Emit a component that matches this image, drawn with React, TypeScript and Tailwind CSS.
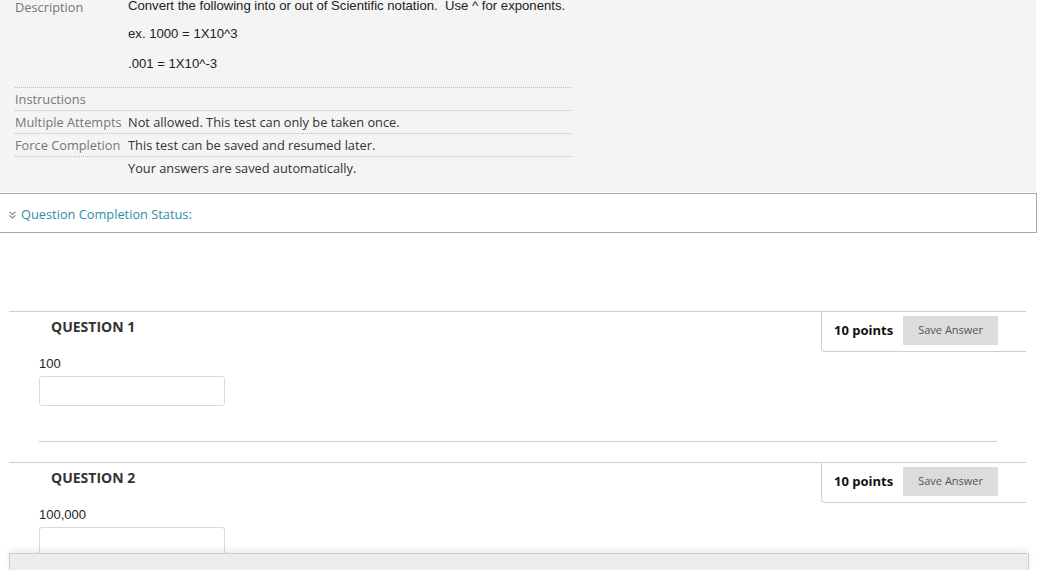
import React from "react";

const openSans = { fontFamily: '"Open Sans", "Liberation Sans", sans-serif' };
const arial = { fontFamily: '"Liberation Sans", Arial, sans-serif' };

type InfoRow = { label: string; value: string };

const rows: InfoRow[] = [
  { label: "Instructions", value: "" },
  { label: "Multiple Attempts", value: "Not allowed. This test can only be taken once." },
  { label: "Force Completion", value: "This test can be saved and resumed later." },
  { label: "", value: "Your answers are saved automatically." },
];

const Question = ({ n, prompt }: { n: number; prompt: string }) => (
  <div className="ml-[9px] w-[1017px] border-t border-[#cfcfcf]">
    <div className="flex justify-between">
      <div
        className="pl-[42px] pt-[6px] text-[14px] leading-[18px] font-bold text-[#333]"
        style={openSans}
      >
        QUESTION {n}
      </div>
      <div className="flex h-[40px] w-[205px] items-start gap-[10px] rounded-bl-[4px] border-b border-l border-[#cfcfcf] pl-[12px] pt-[4px]">
        <span
          className="h-[29px] text-[13px] leading-[29px] font-bold text-[#111]"
          style={openSans}
        >
          10 points
        </span>
        <button
          className="h-[29px] w-[95px] bg-[#dcdcdc] text-[11px] text-[#555]"
          style={openSans}
        >
          Save Answer
        </button>
      </div>
    </div>
    <div className="pl-[30px]">
      <p className="mt-[4px] text-[13px] leading-[16px] text-[#222]" style={arial}>
        {prompt}
      </p>
      <input
        type="text"
        className="mt-[4px] block h-[30px] w-[186px] rounded-[3px] border border-[#dadada] bg-white"
      />
      <div className="mr-[29px] mt-[35px] mb-[20px] border-t border-[#cfcfcf]" />
    </div>
  </div>
);

export default function App() {
  return (
    <div className="relative h-[570px] w-[1038px] overflow-hidden bg-white">
      {/* test info panel */}
      <div className="w-[1036px] rounded-br-[4px] bg-[#f4f4f4] pb-[13px]">
        <div className="ml-[15px] w-[557px]">
          <div className="-mt-[2px] flex pb-[15px]">
            <div
              className="w-[113px] shrink-0 text-[12.8px] leading-[18px] text-[#777]"
              style={openSans}
            >
              Description
            </div>
            <div className="text-[13.15px] leading-[16px] text-[#222]" style={arial}>
              <p>Convert the following into or out of Scientific notation.&nbsp; Use ^ for exponents.</p>
              <p className="mt-[12px]">ex. 1000 = 1X10^3</p>
              <p className="mt-[14px]">.001 = 1X10^-3</p>
            </div>
          </div>
          {rows.map((r, i) => (
            <div
              key={i}
              className="flex h-[23px] border-t border-dotted border-[#bdbdbd] text-[12.8px] leading-[22px]"
              style={openSans}
            >
              <div className="w-[113px] shrink-0 text-[#777]">{r.label}</div>
              <div className="text-[#333]">{r.value}</div>
            </div>
          ))}
        </div>
      </div>

      {/* completion status */}
      <div className="mt-[1px] flex h-[40px] w-[1037px] items-center gap-[5px] border-t border-r border-b border-[#a9a9a9] pl-[9px] pt-[3px]">
        <svg width="7" height="8" viewBox="0 0 7 8" fill="none" stroke="#888" strokeWidth="1.1">
          <path d="M0.5 0.8 L3.5 3.5 L6.5 0.8" />
          <path d="M0.5 4.3 L3.5 7 L6.5 4.3" />
        </svg>
        <span className="text-[12.8px] text-[#2a90ac]" style={openSans}>
          Question Completion Status:
        </span>
      </div>

      <div className="mt-[78px]">
        <Question n={1} prompt="100" />
        <Question n={2} prompt="100,000" />
      </div>

      {/* sticky footer bar */}
      <div className="absolute bottom-0 left-[9px] h-[17px] w-[1020px] border-t border-r border-l border-[#cdcdcd] bg-[#ededed] shadow-[0_-3px_6px_rgba(0,0,0,0.08)]" />
    </div>
  );
}
